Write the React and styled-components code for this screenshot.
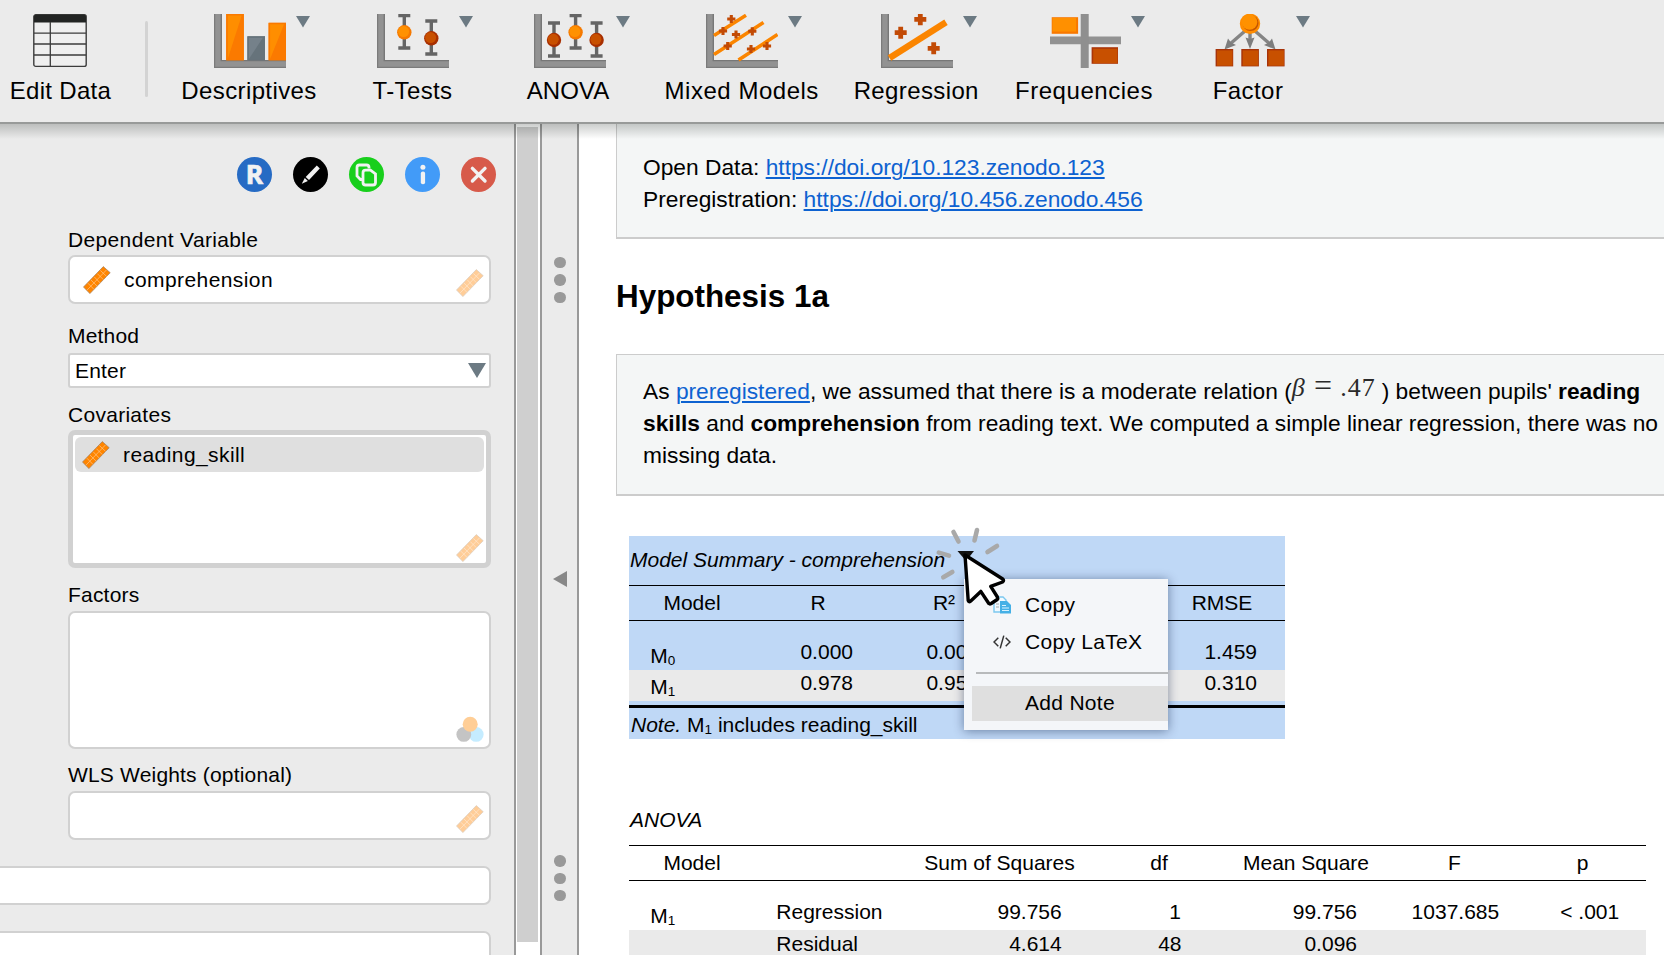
import React from "react";
import styled, { createGlobalStyle } from "styled-components";

const GlobalStyle = createGlobalStyle`
  * { box-sizing: border-box; }
  html, body { margin: 0; padding: 0; }
  body { font-family: "Liberation Sans", Arial, sans-serif; color: #000; background: #fff; overflow: hidden; }
  svg { display: block; flex: none; }
`;

const Window = styled.div`
  width: 1664px;
  height: 955px;
  overflow: hidden;
  display: flex;
  flex-direction: column;
`;

/* ---------- toolbar ---------- */
const Toolbar = styled.header`
  flex: none;
  height: 124px;
  padding-top: 14px;
  background: #ebebeb;
  border-bottom: 2px solid #989a99;
  display: grid;
  grid-template-columns: 120px 52px 156px 170px 144px 200px 150px 186px 144px;
`;
const ToolItem = styled.div`
  display: flex;
  flex-direction: column;
  align-items: center;
`;
const ToolIconRow = styled.div`
  display: flex;
  gap: 10px;
  height: 54px;
  padding-left: ${(p) => (p.$menu ? 24 : 0)}px;
`;
const ToolArrow = styled.svg`
  margin-top: 1.5px;
`;
const ToolLabel = styled.span`
  margin-top: 8px;
  font-size: 24px;
  line-height: 30px;
  letter-spacing: ${(p) => p.$spacing ?? 0.38}px;
  margin-left: ${(p) => p.$shift ?? -2}px;
  white-space: nowrap;
`;
const ToolDivider = styled.i`
  width: 3px;
  height: 76px;
  margin: 7px auto 0;
  border-radius: 2px;
  background: #d3d3d3;
`;

/* ---------- work area ---------- */
const Body = styled.main`
  position: relative;
  flex: 1;
  min-height: 0;
  display: flex;
`;
const TopShade = styled.div`
  position: absolute;
  left: 0;
  right: 0;
  top: 0;
  height: 15px;
  background: linear-gradient(rgba(0, 10, 5, 0.2), rgba(0, 10, 5, 0));
`;
const FormPanel = styled.section`
  width: 514px;
  flex: none;
  background: #ebebeb;
  padding-top: 33px;
  overflow: hidden;
`;
const ActionRow = styled.div`
  display: flex;
  justify-content: flex-end;
  gap: 21px;
  padding-right: 18px;
  margin-bottom: 35px;
`;
const ActionButton = styled.span`
  width: 35px;
  height: 35px;
  border-radius: 50%;
  background: ${(p) => p.$color};
  color: #f2f2f2;
  display: flex;
  align-items: center;
  justify-content: center;
  font: bold 26.5px/35px "Noto Sans", sans-serif;
  -webkit-text-stroke: 0.7px #f2f2f2;
`;
const Group = styled.div`
  margin: 0 23px ${(p) => p.$after}px 68px;
`;
const GroupLabel = styled.div`
  font-size: 21px;
  line-height: 26px;
  height: 24px;
  letter-spacing: ${(p) => p.$spacing ?? 0.35}px;
  margin-bottom: ${(p) => p.$gap ?? 4}px;
  white-space: nowrap;
`;
const Field = styled.div`
  height: ${(p) => p.$height}px;
  background: #fff;
  border: ${(p) => (p.$focused ? 5 : 2)}px solid #d1d1d1;
  border-radius: ${(p) => p.$radius ?? 7}px;
  display: flex;
  align-items: flex-end;
  padding: ${(p) => (p.$focused ? "0 2px 1px 1px" : "0 5px 5px 5px")};
`;
const Variable = styled.div`
  flex: 1;
  align-self: flex-start;
  height: 35px;
  margin-top: ${(p) => (p.$selected ? 2 : 5)}px;
  margin-left: 1px;
  margin-right: ${(p) => (p.$selected ? -28 : 0)}px;
  padding-left: 7px;
  display: flex;
  align-items: center;
  gap: 13px;
  font-size: 21px;
  line-height: 35px;
  letter-spacing: 0.42px;
  border-radius: 6px;
  background: ${(p) => (p.$selected ? "#dfdfdf" : "transparent")};
`;
const Spacer = styled.div`
  flex: 1;
`;
const Select = styled.div`
  height: 35px;
  background: #fff;
  border: 2px solid #d1d1d1;
  border-radius: 3px;
  display: flex;
  align-items: center;
  justify-content: space-between;
  padding: 0 3px 0 5px;
  font-size: 21px;
  line-height: 31px;
  letter-spacing: 0.2px;
`;
const Section = styled.div`
  height: 39px;
  margin: 0 23px 26px -10px;
  background: #fff;
  border: 2px solid #d1d1d1;
  border-radius: 7px;
`;
const ScrollTrack = styled.div`
  width: 28px;
  flex: none;
  background: #fff;
  border-left: 2px solid #999;
  border-right: 2px solid #999;
  padding: 3px 2px 0 1px;
`;
const ScrollThumb = styled.div`
  height: 815px;
  background: #cfcfcf;
`;
const Splitter = styled.div`
  width: 37px;
  flex: none;
  background: #ebebeb;
  border-right: 2px solid #999;
  display: flex;
  flex-direction: column;
  align-items: center;
  padding: 133px 0 0 1px;
`;
const Grip = styled.div`
  display: flex;
  flex-direction: column;
  gap: 6px;
  i {
    width: 11.4px;
    height: 11.4px;
    border-radius: 50%;
    background: #999;
  }
`;
const CollapseArrow = styled.svg`
  margin: 267.5px 0 268.5px;
`;

/* ---------- results ---------- */
const Results = styled.section`
  flex: 1;
  min-width: 0;
  overflow: hidden;
  background: #fff;
  padding-left: 37px;
`;
const Note = styled.div`
  width: 1080px;
  height: ${(p) => p.$height}px;
  background: #f4f6f6;
  border: 1px solid #ccc;
  border-top-width: ${(p) => (p.$open ? 0 : 1)}px;
  border-bottom-width: 2px;
  padding: ${(p) => (p.$open ? 27 : 20)}px 0 0 26px;
  font-size: 22.76px;
  line-height: 32px;
  white-space: nowrap;
`;
const NoteLine = styled.div`
  height: 32px;
`;
const Link = styled.a`
  color: #0d62d1;
  text-decoration: underline;
  text-decoration-thickness: 2px;
  text-underline-offset: 2px;
`;
const Formula = styled.span`
  display: inline-flex;
  align-items: baseline;
  justify-content: space-between;
  width: 84px;
  margin-right: 6px;
  height: 32px;
  margin-bottom: -8px;
  transform: translateY(-3.5px);
  font: 26px/32px "Liberation Serif", serif;
  letter-spacing: 1px;
  color: #2a2a2a;
  i { font-size: 26px; }
`;
const Equals = styled.span`
  font-size: 32px;
  letter-spacing: 0;
  line-height: 20px;
`;
const Heading = styled.h2`
  margin: 38px 0 0;
  height: 77px;
  font-size: 31.4px;
  line-height: 40px;
`;
const TableBlock = styled.div`
  position: relative;
  width: ${(p) => p.$width}px;
  height: 203px;
  margin: 40px 0 57px 13px;
  background: ${(p) => (p.$selected ? "#bfd8f6" : "transparent")};
  font-size: 21px;
`;
const Caption = styled.div`
  height: 49px;
  padding: 10px 0 0 1px;
  line-height: 27px;
  font-style: italic;
`;
const Row = styled.div`
  display: grid;
  grid-template-columns: ${(p) => p.$cols};
  height: 31px;
  line-height: ${(p) => p.$line ?? 26}px;
  background: ${(p) => (p.$shaded ? "#eaeaea" : "transparent")};
`;
const HeadRow = styled(Row)`
  height: 36px;
  line-height: 34px;
  border-top: 1px solid #000;
  border-bottom: 1px solid #000;
  text-align: center;
`;
const FirstRow = styled(Row)`
  height: 49px;
  padding-top: 18px;
`;
const NumCell = styled.span`
  text-align: right;
  padding-right: ${(p) => p.$pad ?? 28}px;
`;
const TextCell = styled.span`
  padding-left: 21.3px;
`;
const ModelCell = styled(TextCell)`
  padding-top: 4px;
`;
const Sub = styled.sub`
  font-size: 13.5px;
  line-height: 0;
  vertical-align: -2px;
`;
const FootNote = styled.div`
  margin-top: 4px;
  border-top: 3px solid #000;
  padding: 3px 0 0 2px;
  line-height: 27px;
`;
const Menu = styled.div`
  position: absolute;
  left: 335px;
  top: 43px;
  width: 204px;
  height: 151px;
  padding: 7px 0 0 8px;
  background: #f4f6f9;
  box-shadow: 0 1px 10px rgba(0, 20, 60, 0.45);
`;
const MenuItem = styled.div`
  display: flex;
  align-items: center;
  gap: 14px;
  height: ${(p) => (p.$active ? 35 : 37)}px;
  padding-left: ${(p) => (p.$icon ? 21 : 53)}px;
  padding-bottom: ${(p) => (p.$active ? 2 : 0)}px;
  line-height: 33px;
  letter-spacing: 0.3px;
  background: ${(p) => (p.$active ? "#dfdfdf" : "transparent")};
`;
const MenuRule = styled.div`
  height: 2px;
  background: #b8babc;
  margin: 12px 0 12px 4px;
`;
const Pointer = styled.svg`
  position: absolute;
  left: 301px;
  top: -16px;
  z-index: 2;
`;

const Axis = () => (
  <g>
    <path d="M0 0H8V46H72V54H0Z" fill="#929292" />
    <path d="M7.3 0V46.6H72" fill="none" stroke="#777" strokeWidth="1.4" />
    <path d="M.6 0V53.4H72" fill="none" stroke="#7b7b7b" strokeWidth="1.2" />
  </g>
);
const Bar = ({ x, y, color, light }) => (
  <g>
    <rect x={x} y={y} width="17.6" height={46 - y} fill={color} />
    <path d={`M${x + 1.5} 45V${y + 1.5}H${x + 15.5}Z`} fill={light} />
    <rect x={x + 0.5} y={y + 0.5} width="16.6" height={45.5 - y} fill="none" stroke={color} />
  </g>
);
const ErrorBar = ({ x, top, bottom, y, dark }) => (
  <g>
    <path
      d={`M${x - 6} ${top}H${x + 6}M${x} ${top}V${bottom}M${x - 6} ${bottom}H${x + 6}`}
      stroke="#656565"
      strokeWidth="3.4"
    />
    <circle cx={x} cy={y} r="7.2" fill={dark ? "#a82f00" : "#f57900"} />
    <circle cx={x - 0.7} cy={y - 0.7} r="5.5" fill={dark ? "#c85000" : "#ff9100"} />
  </g>
);
const Plus = ({ x, y, r, w }) => (
  <path d={`M${x - r} ${y}H${x + r}M${x} ${y - r}V${y + r}`} stroke="#c24a05" strokeWidth={w} />
);
const ToolGraphic = ({ children, width = 72 }) => (
  <svg width={width} height="54" viewBox={`0 0 ${width} 54`}>
    {children}
  </svg>
);

const tools = [
  {
    label: "Descriptives",
    art: (
      <>
        <Axis />
        <Bar x={12.2} y={0} color="#fb7a00" light="#ff8e00" />
        <Bar x={33.4} y={22.3} color="#66737b" light="#75818a" />
        <Bar x={54.6} y={8.8} color="#fb7a00" light="#ff8e00" />
      </>
    ),
  },
  {
    label: "T-Tests",
    shift: -1,
    art: (
      <>
        <Axis />
        <ErrorBar x={27.3} top={1.5} bottom={34} y={18.3} />
        <ErrorBar x={54.3} top={7} bottom={40} y={24.3} dark />
      </>
    ),
  },
  {
    label: "ANOVA",
    shift: -4,
    spacing: 0.1,
    art: (
      <>
        <Axis />
        <ErrorBar x={20} top={9} bottom={42} y={26} dark />
        <ErrorBar x={41.6} top={1.5} bottom={34} y={18.3} />
        <ErrorBar x={62.6} top={9} bottom={42} y={26} dark />
      </>
    ),
  },
  {
    label: "Mixed Models",
    shift: -0.5,
    spacing: 0.52,
    art: (
      <>
        <Axis />
        <path
          d="M8 21.5L40 1.3M8 40.5L57.5 8.5M32.5 46L71.5 20.5"
          stroke="#fb8500"
          strokeWidth="3.6"
        />
        {[[25.3, 5], [17, 17], [30, 20.5], [46.3, 17.3], [21.7, 32], [45, 35], [61, 32]].map(([x, y]) => (
          <Plus key={x} x={x} y={y} r={4.1} w={3.1} />
        ))}
      </>
    ),
  },
  {
    label: "Regression",
    shift: -1.5,
    art: (
      <>
        <Axis />
        <path d="M8.5 44L65 8.3" stroke="#fb8500" strokeWidth="6.4" />
        <Plus x={19.7} y={18.7} r={6} w={4.8} />
        <Plus x={39.3} y={5.3} r={6} w={4.8} />
        <Plus x={52.7} y={34.3} r={6} w={4.8} />
      </>
    ),
  },
  {
    label: "Frequencies",
    spacing: 0.55,
    art: (
      <g transform="translate(1)">
        <path d="M0 22.6H71V30.3H0Z" fill="#929292" />
        <path d="M30.7 0H38.7V54H30.7Z" fill="#8f8f8f" />
        <rect x="1.7" y="3.2" width="26.4" height="16.6" fill="#f97800" />
        <rect x="2.5" y="4" width="23.6" height="13.6" fill="#ff9000" />
        <rect x="41.6" y="33.2" width="26.4" height="16.6" fill="#ab3508" />
        <rect x="43.2" y="34.8" width="24.2" height="14.4" fill="#c85000" />
      </g>
    ),
  },
  {
    label: "Factor",
    shift: -4,
    spacing: 0.45,
    art: (
      <>
        <path d="M31 17L16 30M36 18V27M41 17L56 30" stroke="#858585" strokeWidth="3.4" />
        <path d="M10.5 35.5L14 24.5L17 28.5L22 31ZM36 35L31.5 23.5L36 25L40.5 23.5ZM61.5 35.5L58 24.5L55 28.5L50 31Z" fill="#7d7d7d" />
        <circle cx="36" cy="9.8" r="10.2" fill="#ff8c00" />
        <circle cx="36.5" cy="9" r="8" fill="#c45500" />
        <circle cx="35.5" cy="8" r="7.8" fill="#ff9100" />
        {[1.6, 27.3, 53].map((x) => (
          <g key={x}>
            <rect x={x} y="35" width="17.6" height="17.4" fill="#a6330a" />
            <rect x={x + 1.4} y="36.4" width="15.5" height="15.3" fill="#c85000" />
          </g>
        ))}
      </>
    ),
  },
];

const SheetIcon = () => (
  <svg width="54" height="54" viewBox="0 0 54 54">
    <rect x=".8" y=".8" width="52.4" height="51.6" rx="2" fill="#efefef" stroke="#3c3c3c" strokeWidth="1.4" />
    <path d="M1 8.5V2.5Q1 .8 3 .8H51Q53 .8 53 2.5V8.5Z" fill="#222423" />
    <path d="M1 19.2H53M1 30H53M1 41H53M17.3 8V52" stroke="#3c3c3c" strokeWidth="1.3" fill="none" />
  </svg>
);

const Ruler = ({ faded }) => (
  <svg width="28" height="28" viewBox="0 0 28 28" opacity={faded ? 0.4 : 1}>
    <path d="M20.3 .6L27.2 6.7L6.9 27.6L.5 21Z" fill="#ff8500" stroke="#a08060" strokeWidth=".7" />
    <path
      d="M23.6 3.8L3.8 24.3M17.3 4.4L23.6 10.4M14.3 7.6L20.4 13.7M11.2 10.8L17.2 17M8 14L14.1 20.2M4.9 17.2L11 23.4"
      stroke="#ffc58a"
      strokeWidth=".7"
    />
  </svg>
);

const Nominal = () => (
  <svg width="28" height="26" viewBox="0 0 28 26">
    <circle cx="20.2" cy="18.4" r="7.4" fill="#c5ecff" />
    <circle cx="7.8" cy="18.4" r="7.4" fill="#c4c4c4" />
    <circle cx="14.2" cy="8.2" r="7.5" fill="#ffce96" />
  </svg>
);

const T1 = "126px 126px 126px 152px 126px";
const T2 = "126px 148px 193px 126px 168px 129px 127px";

export default function App() {
  return (
    <Window>
      <GlobalStyle />
      <Toolbar>
        <ToolItem>
          <ToolIconRow><SheetIcon /></ToolIconRow>
          <ToolLabel $spacing={0.3} $shift={1}>Edit Data</ToolLabel>
        </ToolItem>
        <ToolDivider />
        {tools.map((t) => (
          <ToolItem key={t.label}>
            <ToolIconRow $menu>
              <ToolGraphic>{t.art}</ToolGraphic>
              <ToolArrow width="14" height="12" viewBox="0 0 14 12">
                <path d="M0 0H14L7 11.5Z" fill="#6c7a83" />
              </ToolArrow>
            </ToolIconRow>
            <ToolLabel $spacing={t.spacing} $shift={t.shift}>{t.label}</ToolLabel>
          </ToolItem>
        ))}
      </Toolbar>

      <Body>
        <FormPanel>
          <ActionRow>
            <ActionButton $color="#266bc4">R</ActionButton>
            <ActionButton $color="#000">
              <svg width="35" height="35" viewBox="0 0 35 35">
                <path d="M23.8 8.6L26.8 11.4L16 23L12.7 20Z" fill="#f2f2f2" />
                <path d="M11.8 21L14.9 24L8.8 26.8Z" fill="#f2f2f2" />
              </svg>
            </ActionButton>
            <ActionButton $color="#18cf1c">
              <svg width="35" height="35" viewBox="0 0 35 35" fill="none" stroke="#f2f2f2" strokeWidth="2.8">
                <path d="M13 22.5H11.5L8 19V10.5Q8 8 10.5 8H17.5Q20 8 20 10.5V11.5" />
                <path d="M16.5 13.2H21.5L26.5 17V25.5Q26.5 28 24 28H16.5Q14 28 14 25.5V15.7Q14 13.2 16.5 13.2Z" />
              </svg>
            </ActionButton>
            <ActionButton $color="#429bf8">
              <svg width="35" height="35" viewBox="0 0 35 35" fill="#f2f2f2">
                <circle cx="17.9" cy="10.3" r="2.5" />
                <rect x="15.8" y="14.6" width="4.3" height="12.6" rx="2" />
              </svg>
            </ActionButton>
            <ActionButton $color="#d75a4a">
              <svg width="35" height="35" viewBox="0 0 35 35">
                <path d="M11.4 11.4L24 24M24 11.4L11.4 24" stroke="#f2f2f2" strokeWidth="3.4" strokeLinecap="round" />
              </svg>
            </ActionButton>
          </ActionRow>

          <Group $after={19}>
            <GroupLabel>Dependent Variable</GroupLabel>
            <Field $height={49}>
              <Variable><Ruler />comprehension</Variable>
              <Ruler faded />
            </Field>
          </Group>
          <Group $after={14}>
            <GroupLabel $gap={6} $spacing={0.2}>Method</GroupLabel>
            <Select>
              Enter
              <svg width="18" height="15" viewBox="0 0 18 15"><path d="M0 0H18L9 15Z" fill="#6c7a83" /></svg>
            </Select>
          </Group>
          <Group $after={14}>
            <GroupLabel $spacing={0.28}>Covariates</GroupLabel>
            <Field $height={138} $focused>
              <Variable $selected><Ruler />reading_skill</Variable>
              <Ruler faded />
            </Field>
          </Group>
          <Group $after={13}>
            <GroupLabel $gap={5} $spacing={0.2}>Factors</GroupLabel>
            <Field $height={138}>
              <Spacer />
              <Nominal />
            </Field>
          </Group>
          <Group $after={26}>
            <GroupLabel $gap={5} $spacing={0.18}>WLS Weights (optional)</GroupLabel>
            <Field $height={49}>
              <Spacer />
              <Ruler faded />
            </Field>
          </Group>
          <Section />
          <Section />
        </FormPanel>
        <ScrollTrack><ScrollThumb /></ScrollTrack>
        <Splitter>
          <Grip><i /><i /><i /></Grip>
          <CollapseArrow width="14" height="16" viewBox="0 0 14 16">
            <path d="M14 0V16L0 8Z" fill="#888" />
          </CollapseArrow>
          <Grip><i /><i /><i /></Grip>
        </Splitter>

        <Results>
          <Note $open $height={115}>
            <NoteLine>Open Data: <Link>https://doi.org/10.123.zenodo.123</Link></NoteLine>
            <NoteLine>Preregistration: <Link>https://doi.org/10.456.zenodo.456</Link></NoteLine>
          </Note>
          <Heading>Hypothesis 1a</Heading>
          <Note $height={142}>
            <NoteLine>
              As <Link>preregistered</Link>, we assumed that there is a moderate relation (
              <Formula><i>β</i><Equals>=</Equals><span>.47</span></Formula>
              ) between pupils' <b>reading</b>
            </NoteLine>
            <NoteLine>
              <b>skills</b> and <b>comprehension</b> from reading text. We computed a simple linear regression, there was no
            </NoteLine>
            <NoteLine>missing data.</NoteLine>
          </Note>

          <TableBlock $selected $width={656}>
            <Caption>Model Summary - comprehension</Caption>
            <HeadRow $cols={T1}>
              <span>Model</span><span>R</span><span>R²</span><span /><span>RMSE</span>
            </HeadRow>
            <FirstRow $cols={T1}>
              <ModelCell>M<Sub>0</Sub></ModelCell>
              <NumCell>0.000</NumCell><NumCell>0.000</NumCell><span /><NumCell>1.459</NumCell>
            </FirstRow>
            <Row $cols={T1} $shaded>
              <ModelCell>M<Sub>1</Sub></ModelCell>
              <NumCell>0.978</NumCell><NumCell>0.956</NumCell><span /><NumCell>0.310</NumCell>
            </Row>
            <FootNote><i>Note.</i> M<Sub>1</Sub> includes reading_skill</FootNote>
            <Menu>
              <MenuItem $icon>
                <svg width="18" height="18" viewBox="0 0 18 18">
                  <path d="M1 1H10L13 4V16H1Z" fill="#f2faff" stroke="#7cc8ef" strokeWidth="1.4" />
                  <path d="M3 8H6M3 11H6" stroke="#aaa" />
                  <path d="M7 5H14L18 9V17.5H7Z" fill="#45b0e6" />
                  <path d="M9 9.5H13M9 12H16M9 14.5H16" stroke="#d9f2ff" strokeWidth="1.1" />
                </svg>
                Copy
              </MenuItem>
              <MenuItem $icon>
                <svg width="18" height="14" viewBox="0 0 18 14" fill="none" stroke="#333" strokeWidth="1.5">
                  <path d="M5.3 2.8L1 7L5.3 11.2M12.7 2.8L17 7L12.7 11.2M10.8 .6L7.2 13.4" />
                </svg>
                Copy LaTeX
              </MenuItem>
              <MenuRule />
              <MenuItem $active>Add Note</MenuItem>
            </Menu>
            <Pointer width="85" height="96" viewBox="930 520 85 96">
              <path d="M957.5 551H974L966 561Z" fill="#111" />
              <path
                d="M953.5 532L958.5 541.5M977 530L974.5 540.5M997 546L987.5 552M938.8 552.6L949 555.6M952.3 572L943.3 577.3"
                stroke="#a9a9a9"
                strokeWidth="4.6"
                strokeLinecap="round"
              />
              <path
                d="M965 555L968.2 600.6Q968.8 602.5 970.5 601.2L980.8 591.4L988.8 603.5Q989.8 604.3 991.2 603.5L997.2 599.5Q998.2 598.5 997.4 597L990.7 586.4L1002.6 582Q1004.4 580.6 1002.7 579Z"
                fill="#fff"
                stroke="#000"
                strokeWidth="3.4"
                strokeLinejoin="round"
              />
            </Pointer>
          </TableBlock>

          <TableBlock $width={1017}>
            <Caption>ANOVA</Caption>
            <HeadRow $cols={T2}>
              <span>Model</span><span /><span>Sum of Squares</span><span>df</span><span>Mean Square</span><span>F</span><span>p</span>
            </HeadRow>
            <FirstRow $cols={T2}>
              <ModelCell>M<Sub>1</Sub></ModelCell>
              <TextCell>Regression</TextCell>
              <NumCell $pad={34.3}>99.756</NumCell>
              <NumCell $pad={41}>1</NumCell>
              <NumCell $pad={33}>99.756</NumCell>
              <NumCell $pad={19.8}>1037.685</NumCell>
              <NumCell $pad={26.8}>&lt; .001</NumCell>
            </FirstRow>
            <Row $cols={T2} $shaded $line={28}>
              <span />
              <TextCell>Residual</TextCell>
              <NumCell $pad={34.3}>4.614</NumCell>
              <NumCell $pad={40.5}>48</NumCell>
              <NumCell $pad={33}>0.096</NumCell>
              <span /><span />
            </Row>
          </TableBlock>
        </Results>
        <TopShade />
      </Body>
    </Window>
  );
}
